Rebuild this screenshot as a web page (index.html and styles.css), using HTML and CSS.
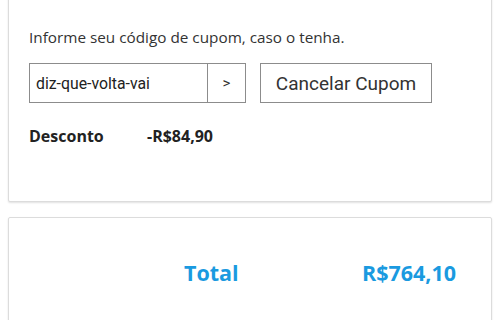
FILE: index.html
```html
<!DOCTYPE html>
<html lang="pt-BR">
<head>
<meta charset="utf-8">
<link rel="stylesheet" href="styles.css">
</head>
<body>
<div class="page">
  <section class="card coupon">
    <p class="hint">Informe seu código de cupom, caso o tenha.</p>
    <div class="coupon-row">
      <div class="coupon-field">
        <span class="coupon-input">diz-que-volta-vai</span>
        <span class="coupon-go">&gt;</span>
      </div>
      <span class="cancel-btn">Cancelar Cupom</span>
    </div>
    <div class="discount">
      <span class="discount-label">Desconto</span>
      <span class="discount-value">-R$84,90</span>
    </div>
  </section>
  <section class="card totals">
    <div class="total-row">
      <span class="total-label">Total</span>
      <span class="total-value">R$764,10</span>
    </div>
  </section>
</div>
</body>
</html>
```
FILE: styles.css
```css
html, body {
  margin: 0;
  padding: 0;
  background: #ffffff;
}
.page {
  padding: 0 8px;
  display: flex;
  flex-direction: column;
  gap: 15px;
  margin-top: -10px;
}
.card {
  background: #fff;
  border: 1px solid #dcdcdc;
  border-radius: 2px;
  box-shadow: 0 1px 2px rgba(0,0,0,0.12);
}
.coupon {
  height: 212px;
  box-sizing: border-box;
  padding: 35px 20px 0 20px;
}
.hint {
  margin: 0;
  font-family: "Open Sans", sans-serif;
  font-size: 15.3px;
  color: #333;
  line-height: 22px;
}
.coupon-row {
  display: flex;
  align-items: center;
  margin-top: 15px;
}
.coupon-field {
  display: flex;
  height: 40px;
  box-sizing: border-box;
  border: 1px solid #8c8c8c;
}
.coupon-input {
  width: 178px;
  box-sizing: border-box;
  padding-left: 6px;
  font-family: Roboto, sans-serif;
  font-size: 15.8px;
  color: #222;
  display: flex;
  align-items: center;
  border-right: 1px solid #8c8c8c;
}
.coupon-go {
  width: 37px;
  display: flex;
  align-items: center;
  justify-content: center;
  font-family: Roboto, sans-serif;
  font-size: 15px;
  color: #333;
}
.cancel-btn {
  margin-left: 14px;
  width: 172px;
  height: 40px;
  box-sizing: border-box;
  border: 1px solid #8c8c8c;
  display: flex;
  align-items: center;
  justify-content: center;
  font-family: Roboto, sans-serif;
  font-size: 19px;
  color: #333;
}
.discount {
  display: flex;
  margin-top: 22px;
  font-family: "Open Sans", sans-serif;
  font-weight: 700;
  font-size: 16px;
  color: #222;
}
.discount-label {
  width: 118px;
}
.totals {
  height: 130px;
  box-sizing: border-box;
}
.total-row {
  display: flex;
  align-items: baseline;
  padding-top: 40px;
  font-family: "Open Sans", sans-serif;
  font-weight: 700;
  font-size: 21.5px;
  color: #1a9ae0;
}
.total-label {
  margin-left: 175px;
  width: 178px;
}
```
